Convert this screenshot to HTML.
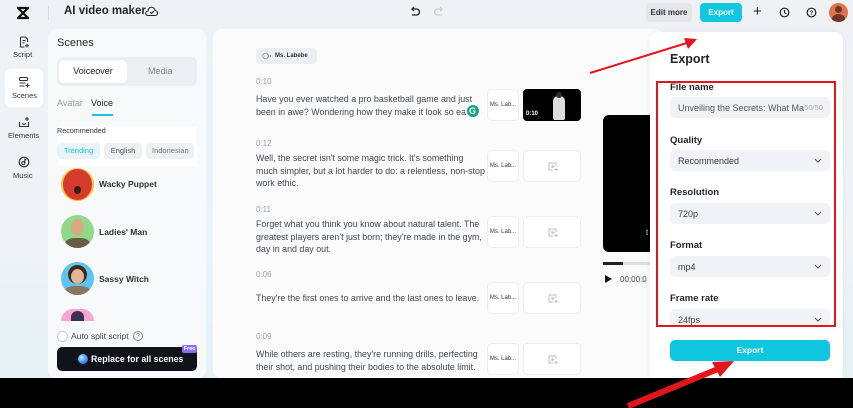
<!DOCTYPE html>
<html><head><meta charset="utf-8">
<style>
*{box-sizing:border-box;margin:0;padding:0}
body{width:853px;height:408px;overflow:hidden;position:relative;background:linear-gradient(180deg,#f0f1f4 0%,#eef3f6 60%,#e3f1f5 100%);font-family:"Liberation Sans",sans-serif;color:#1f2329}
.a{position:absolute}
.t{font-size:10px;color:#3a3f47}
.pill{background:#eef0f3;border-radius:4px}
.card{position:absolute;border:1px solid #eceef1;border-radius:5px;background:#fff}
.ml{font-size:6px;color:#333;display:flex;align-items:center;justify-content:center}
.time{position:absolute;left:256px;font-size:8px;color:#9aa0a8}
.txt{position:absolute;left:256px;font-size:8.9px;line-height:12.5px;color:#424851;white-space:nowrap}
.lab{position:absolute;left:670px;font-size:9.5px;font-weight:bold;color:#1f2329}
.sel{position:absolute;left:670px;width:160px;height:21px;background:#f0f2f5;border-radius:5px;font-size:9px;color:#3a3f47;padding:6px 8px}
</style></head><body>
<svg class="a" style="left:15px;top:6px" width="16" height="14" viewBox="0 0 16 14"><path d="M2 2h12M2 12h12M3 2l10 10M13 2L3 12" stroke="#111" stroke-width="2.2" fill="none"/></svg>
<div class="a" style="left:48px;top:6px;width:1px;height:14px;background:#ddd"></div>
<div class="a" style="left:64px;top:5px;font-size:11.5px;font-weight:bold;white-space:nowrap">AI video maker</div>
<svg class="a" style="left:145px;top:6px" width="13" height="11" viewBox="0 0 13 11"><path d="M3 9.5h7a2.5 2.5 0 0 0 0-5 3.5 3.5 0 0 0-7 .5A2.2 2.2 0 0 0 3 9.5zM5 6l1.5 1.5L9 5" stroke="#222" stroke-width="1.1" fill="none"/></svg>
<svg class="a" style="left:409px;top:6px" width="12" height="11" viewBox="0 0 12 11"><path d="M3 3h4.5a3 3 0 0 1 0 6H3M5 1L3 3l2 2" stroke="#222" stroke-width="1.3" fill="none"/></svg>
<svg class="a" style="left:433px;top:6px" width="12" height="11" viewBox="0 0 12 11"><path d="M9 3H4.5a3 3 0 0 0 0 6H9M7 1l2 2-2 2" stroke="#ccc" stroke-width="1.3" fill="none"/></svg>
<div class="a" style="left:646px;top:3px;width:46px;height:19px;background:#e4e6ea;border-radius:4px;font-size:8px;font-weight:bold;color:#333;text-align:center;line-height:19px">Edit more</div>
<div class="a" style="left:700px;top:3px;width:42px;height:19px;background:#12c8e0;border-radius:4px;font-size:8px;font-weight:bold;color:#fff;text-align:center;line-height:19px">Export</div>
<div class="a" style="left:753px;top:3px;font-size:15px;color:#222">+</div>
<svg class="a" style="left:779px;top:7px" width="11" height="11" viewBox="0 0 11 11"><circle cx="5.5" cy="5.5" r="4.3" stroke="#222" stroke-width="1.2" fill="none"/><path d="M5.5 3v2.7l1.8 1" stroke="#222" stroke-width="1.1" fill="none"/></svg>
<svg class="a" style="left:806px;top:7px" width="11" height="11" viewBox="0 0 11 11"><circle cx="5.5" cy="5.5" r="4.3" stroke="#222" stroke-width="1.2" fill="none"/><text x="3.5" y="8" font-size="6" font-weight="bold" fill="#222" font-family="Liberation Sans">?</text></svg>
<div class="a" style="left:829px;top:3px;width:19px;height:19px;border-radius:50%;background:#e0734a;overflow:hidden"><div class="a" style="left:6px;top:3px;width:7px;height:7px;border-radius:50%;background:#6b3626"></div><div class="a" style="left:3px;top:11px;width:13px;height:10px;border-radius:50%;background:#6b3626"></div></div>

<svg class="a" style="left:18px;top:36px" width="12" height="12" viewBox="0 0 12 12"><path d="M2.5 1h5l2 2v3M2.5 1v10h4M4.5 4.5h3M4.5 7h2M9 8v3.5M7.2 9.7h3.6" stroke="#333" stroke-width="1.1" fill="none"/></svg>
<div class="a t" style="left:13px;top:50px;font-size:7.5px;color:#333">Script</div>
<div class="a" style="left:5px;top:69px;width:38px;height:38px;background:#fff;border-radius:6px"></div>
<svg class="a" style="left:18px;top:76px" width="12" height="12" viewBox="0 0 12 12"><rect x="1.5" y="1.5" width="8" height="3" rx="1" stroke="#333" stroke-width="1.1" fill="none"/><path d="M1.5 7h6M1.5 10h5M9.5 7.5v4M7.5 9.5h4" stroke="#333" stroke-width="1.1"/></svg>
<div class="a" style="left:12px;top:91px;font-size:7.5px;color:#333">Scenes</div>
<svg class="a" style="left:18px;top:116px" width="12" height="12" viewBox="0 0 12 12"><path d="M1.5 6v4.5h9V6M4 7.5q2 1.5 4 0M9 1v4M7 3h4" stroke="#333" stroke-width="1.1" fill="none"/></svg>
<div class="a" style="left:8px;top:131px;font-size:7.5px;color:#333">Elements</div>
<svg class="a" style="left:18px;top:156px" width="12" height="12" viewBox="0 0 12 12"><circle cx="6" cy="6" r="4.8" stroke="#333" stroke-width="1.2" fill="none"/><circle cx="5.3" cy="7" r="1.5" stroke="#333" stroke-width="1.1" fill="none"/><path d="M6.8 7V3.2l1.6.8" stroke="#333" stroke-width="1.1" fill="none"/></svg>
<div class="a" style="left:13px;top:171px;font-size:7.5px;color:#333">Music</div>

<div class="a" style="left:48px;top:29px;width:158px;height:349px;background:#f8f9fb;border-radius:8px"></div>
<div class="a" style="left:57px;top:37px;font-size:11px;color:#1f2329">Scenes</div>
<div class="a" style="left:57px;top:57px;width:140px;height:29px;background:#eceef1;border-radius:6px"></div>
<div class="a" style="left:59px;top:60px;width:68px;height:23px;background:#fff;border-radius:5px;font-size:9px;text-align:center;line-height:23px;color:#222">Voiceover</div>
<div class="a" style="left:148px;top:66px;font-size:9px;color:#888">Media</div>
<div class="a" style="left:57px;top:98px;font-size:9px;color:#999">Avatar</div>
<div class="a" style="left:91px;top:98px;font-size:9px;color:#222">Voice</div>
<div class="a" style="left:92px;top:114px;width:21px;height:2px;background:#1cc4dc"></div>
<div class="a" style="left:57px;top:126px;width:140px;height:40px;background:#fff"></div>
<div class="a" style="left:57px;top:126px;font-size:7.2px;color:#333">Recommended</div>
<div class="a pill" style="left:57px;top:143px;width:43px;height:16px;background:#e8f4f7;font-size:7.5px;color:#1cc4dc;text-align:center;line-height:16px">Trending</div>
<div class="a pill" style="left:104px;top:143px;width:38px;height:16px;font-size:7.5px;color:#555;text-align:center;line-height:16px">English</div>
<div class="a pill" style="left:146px;top:143px;width:48px;height:16px;font-size:7.5px;color:#777;line-height:16px;padding-left:6px;overflow:hidden">Indonesian</div>
<div class="a" style="left:61px;top:168px;width:33px;height:33px;border-radius:50%;background:#f3c33d"><div class="a" style="left:2px;top:1px;width:29px;height:31px;border-radius:50%;background:#d63a2c"></div><div class="a" style="left:13px;top:18px;width:7px;height:8px;border-radius:50%;background:#3a1a14"></div></div>
<div class="a" style="left:99px;top:179px;font-size:8.5px;font-weight:bold;color:#333">Wacky Puppet</div>
<div class="a" style="left:61px;top:215px;width:33px;height:33px;border-radius:50%;background:#8fd98a;overflow:hidden"><div class="a" style="left:10px;top:4px;width:13px;height:17px;border-radius:50%;background:#d9a985"></div><div class="a" style="left:4px;top:23px;width:25px;height:14px;border-radius:40%;background:#6a5a48"></div></div>
<div class="a" style="left:99px;top:227px;font-size:8.5px;font-weight:bold;color:#333">Ladies' Man</div>
<div class="a" style="left:61px;top:262px;width:33px;height:33px;border-radius:50%;background:#5cc6ef;overflow:hidden"><div class="a" style="left:7px;top:3px;width:19px;height:19px;border-radius:50%;background:#3d2a1c"></div><div class="a" style="left:10px;top:7px;width:13px;height:15px;border-radius:50%;background:#e3b695"></div><div class="a" style="left:4px;top:24px;width:25px;height:12px;border-radius:40%;background:#8a7560"></div></div>
<div class="a" style="left:99px;top:274px;font-size:8.5px;font-weight:bold;color:#333">Sassy Witch</div>
<div class="a" style="left:61px;top:309px;width:33px;height:12px;border-radius:17px 17px 0 0;background:#f7a6cf;overflow:hidden"><div class="a" style="left:10px;top:2px;width:13px;height:12px;border-radius:50% 50% 0 0;background:#3a3050"></div></div>
<div class="a" style="left:57px;top:331px;width:11px;height:11px;border-radius:50%;border:1px solid #ccc;background:#fff"></div>
<div class="a" style="left:71px;top:331px;font-size:8.5px;color:#444">Auto split script</div>
<div class="a" style="left:133px;top:331px;width:10px;height:10px;border-radius:50%;border:1px solid #888;font-size:7px;text-align:center;line-height:9px;color:#666">?</div>
<div class="a" style="left:57px;top:347px;width:140px;height:24px;background:#10141a;border-radius:5px"></div>
<div class="a" style="left:78px;top:354px;width:10px;height:10px;border-radius:50%;background:radial-gradient(circle at 35% 35%,#9ff,#4a7bff 60%,#6a4cff)"></div>
<div class="a" style="left:91px;top:354px;font-size:8.8px;font-weight:bold;color:#fff">Replace for all scenes</div>
<div class="a" style="left:182px;top:345px;width:15px;height:8px;background:#8b6cff;border-radius:2px;font-size:5.5px;color:#fff;text-align:center;line-height:8px;font-weight:bold">Free</div>

<div class="a" style="left:213px;top:29px;width:450px;height:349px;background:#fbfbfc;border-radius:8px"></div>
<div class="a" style="left:256px;top:48px;width:61px;height:16px;background:#eceef1;border-radius:4px;font-size:6px;font-weight:bold;color:#333;line-height:16px;padding-left:19px">Ms. Labebe</div>
<svg class="a" style="left:262px;top:52px" width="10" height="8" viewBox="0 0 10 8"><circle cx="3.5" cy="4" r="2.8" stroke="#999" fill="none" stroke-width=".9"/><path d="M7 2.5v3M8.5 3v2" stroke="#999" stroke-width=".9"/></svg>

<div class="time" style="top:77px">0:10</div>
<div class="txt" style="top:93px">Have you ever watched a pro basketball game and just<br>been in awe? Wondering how they make it look so eas</div>
<div class="a" style="left:465px;top:103px;width:15px;height:15px;border-radius:50%;background:#fff"><div class="a" style="left:1.5px;top:1.5px;width:12px;height:12px;border-radius:50%;background:#15a37b;color:#fff;font-size:9px;font-weight:bold;text-align:center;line-height:12px">G</div></div>
<div class="card ml" style="left:487px;top:89px;width:32px;height:32px">Ms. Lab...</div>
<div class="a" style="left:523px;top:89px;width:58px;height:32px;background:#000;border-radius:4px"><div class="a" style="left:30px;top:7px;width:12px;height:24px;background:#ddd;border-radius:5px 5px 2px 2px"></div><div class="a" style="left:33px;top:3px;width:6px;height:6px;border-radius:50%;background:#3a2a20"></div><div class="a" style="left:3px;top:22px;font-size:6px;font-weight:bold;color:#fff">0:10</div></div>

<div class="time" style="top:139px">0:12</div>
<div class="txt" style="top:152px">Well, the secret isn't some magic trick. It's something<br>much simpler, but a lot harder to do: a relentless, non-stop<br>work ethic.</div>
<div class="card ml" style="left:487px;top:150px;width:32px;height:32px">Ms. Lab...</div>
<div class="card" style="left:523px;top:150px;width:58px;height:32px"><svg class="a" style="left:24px;top:11px" width="10" height="9" viewBox="0 0 10 9"><path d="M8 4V1H1v7h4M4 3.5l2 1-2 1zM8 6v3M6.5 7.5h3" stroke="#bbb" stroke-width=".9" fill="none"/></svg></div>

<div class="time" style="top:205px">0:11</div>
<div class="txt" style="top:218px">Forget what you think you know about natural talent. The<br>greatest players aren't just born; they're made in the gym,<br>day in and day out.</div>
<div class="card ml" style="left:487px;top:216px;width:32px;height:32px">Ms. Lab...</div>
<div class="card" style="left:523px;top:216px;width:58px;height:32px"><svg class="a" style="left:24px;top:11px" width="10" height="9" viewBox="0 0 10 9"><path d="M8 4V1H1v7h4M4 3.5l2 1-2 1zM8 6v3M6.5 7.5h3" stroke="#bbb" stroke-width=".9" fill="none"/></svg></div>

<div class="time" style="top:270px">0:06</div>
<div class="txt" style="top:292px">They're the first ones to arrive and the last ones to leave.</div>
<div class="card ml" style="left:487px;top:282px;width:32px;height:32px">Ms. Lab...</div>
<div class="card" style="left:523px;top:282px;width:58px;height:32px"><svg class="a" style="left:24px;top:11px" width="10" height="9" viewBox="0 0 10 9"><path d="M8 4V1H1v7h4M4 3.5l2 1-2 1zM8 6v3M6.5 7.5h3" stroke="#bbb" stroke-width=".9" fill="none"/></svg></div>

<div class="time" style="top:332px">0:09</div>
<div class="txt" style="top:348px">While others are resting, they're running drills, perfecting<br>their shot, and pushing their bodies to the absolute limit.</div>
<div class="card ml" style="left:487px;top:343px;width:32px;height:32px">Ms. Lab...</div>
<div class="card" style="left:523px;top:343px;width:58px;height:32px"><svg class="a" style="left:24px;top:11px" width="10" height="9" viewBox="0 0 10 9"><path d="M8 4V1H1v7h4M4 3.5l2 1-2 1zM8 6v3M6.5 7.5h3" stroke="#bbb" stroke-width=".9" fill="none"/></svg></div>

<div class="a" style="left:603px;top:115px;width:60px;height:137px;background:#000;border-radius:6px"></div>
<div class="a" style="left:646px;top:228px;font-size:8px;color:#ccc">t</div>
<div class="a" style="left:603px;top:262px;width:47px;height:3px;background:#ddd"></div>
<div class="a" style="left:603px;top:262px;width:20px;height:3px;background:#222"></div>
<svg class="a" style="left:605px;top:275px" width="7" height="8" viewBox="0 0 7 8"><path d="M0 0l7 4-7 4z" fill="#111"/></svg>
<div class="a" style="left:620px;top:275px;font-size:8px;color:#444">00:00:0</div>

<div class="a" style="left:650px;top:32px;width:193px;height:346px;background:#fff;border-radius:8px 8px 0 0;box-shadow:0 0 6px rgba(0,0,0,.06)"></div>
<div class="a" style="left:670px;top:52px;font-size:12.5px;font-weight:bold;color:#1f2329">Export</div>
<div class="lab" style="top:82px">File name</div>
<div class="sel" style="top:97px;color:#555">Unveiling the Secrets: What Ma<span style="position:absolute;right:7px;top:6px;font-size:7.5px;color:#aaa">50/50</span></div>
<div class="lab" style="top:135px">Quality</div>
<div class="sel" style="top:150px">Recommended</div>
<div class="lab" style="top:187px">Resolution</div>
<div class="sel" style="top:203px">720p</div>
<div class="lab" style="top:240px">Format</div>
<div class="sel" style="top:256px">mp4</div>
<div class="lab" style="top:293px">Frame rate</div>
<div class="sel" style="top:309px;height:18px">24fps</div>
<svg class="a" style="left:814px;top:158px" width="8" height="5" viewBox="0 0 8 5"><path d="M1 1l3 3 3-3" stroke="#555" fill="none"/></svg>
<svg class="a" style="left:814px;top:211px" width="8" height="5" viewBox="0 0 8 5"><path d="M1 1l3 3 3-3" stroke="#555" fill="none"/></svg>
<svg class="a" style="left:814px;top:264px" width="8" height="5" viewBox="0 0 8 5"><path d="M1 1l3 3 3-3" stroke="#555" fill="none"/></svg>
<svg class="a" style="left:814px;top:317px" width="8" height="5" viewBox="0 0 8 5"><path d="M1 1l3 3 3-3" stroke="#555" fill="none"/></svg>
<div class="a" style="left:656px;top:81px;width:180px;height:246px;border:2px solid #e8141c"></div>
<div class="a" style="left:670px;top:340px;width:160px;height:21px;background:#0ec6e0;border-radius:5px;font-size:8.5px;font-weight:bold;color:#fff;text-align:center;line-height:21px">Export</div>

<div class="a" style="left:0;top:378px;width:853px;height:30px;background:#000"></div>

<svg class="a" style="left:0;top:0" width="853" height="408" viewBox="0 0 853 408">
<path d="M590 73L690 42" stroke="#e3151c" stroke-width="2"/>
<path d="M697 39L684 38L688 49z" fill="#e3151c"/>
<path d="M628 406L718 369" stroke="#e3151c" stroke-width="6"/>
<path d="M734 361L712 362L720 377z" fill="#e3151c"/>
</svg>
</body></html>
